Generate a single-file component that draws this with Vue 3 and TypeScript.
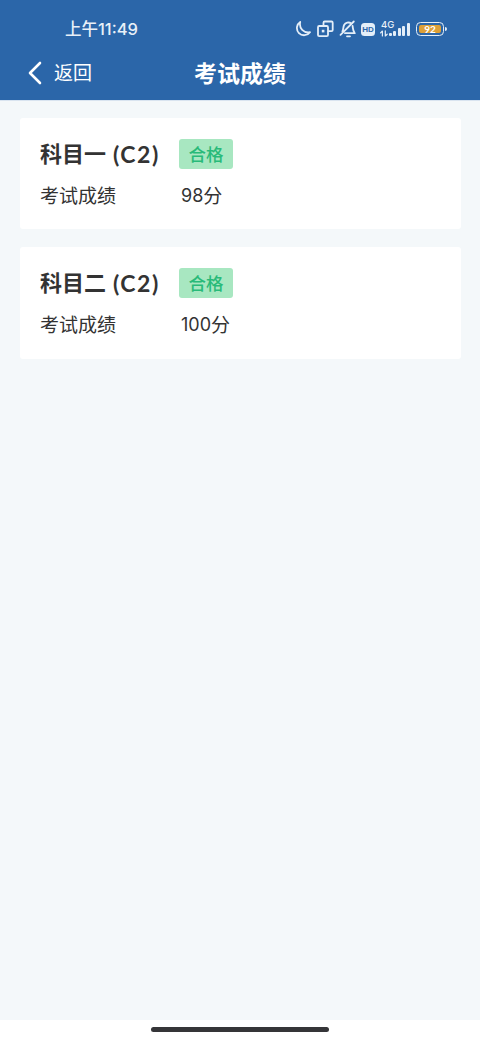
<script setup lang="ts">
interface Exam {
  subject: string
  vehicle: string
  result: string
  score: number
}

const exams: Exam[] = [
  { subject: '科目一', vehicle: '(C2)', result: '合格', score: 98 },
  { subject: '科目二', vehicle: '(C2)', result: '合格', score: 100 },
]
const signalBars: number[] = [3, 5, 8, 10, 13]
</script>

<template>
  <div class="screen">
    <header class="header">
      <div class="status">
        <div class="time"><span>上午</span><span class="clock">11:49</span></div>
        <div class="icons">
          <svg class="moon" width="16" height="18" viewBox="0 0 16 18">
            <path d="M5.2 2A7.2 7.2 0 1 0 15 12.2C8.6 13.2 3.8 8.4 5.2 2Z" />
          </svg>
          <svg class="windows" width="17" height="18" viewBox="0 0 17 18">
            <path d="M6.5 5V2.7Q6.5 1.5 7.7 1.5H14.5Q15.7 1.5 15.7 2.7V10Q15.7 11.2 14.5 11.2H11.5" />
            <rect x="1" y="6" width="10" height="10.2" rx="1.2" />
            <rect class="solid" x="4.8" y="9.8" width="2.6" height="2.6" />
          </svg>
          <svg class="bell" width="18" height="18" viewBox="0 0 18 18">
            <path d="M3.4 11.2C4.6 9.6 4 7.1 5.1 5C6.4 2.6 9.8 1.8 12 3.2M13.6 6C14 8.4 13.7 10.6 15.8 13.2H6M1.5 14.8L14.8 1.5M8 16.3H11" />
          </svg>
          <span class="hd">HD</span>
          <div class="signal">
            <span class="network">4G</span>
            <svg class="data" width="8" height="7" viewBox="0 0 8 7">
              <path d="M2.4 6V1L.6 2.8M5.3 .8V6L7.2 4.2" />
            </svg>
            <div class="bars">
              <i v-for="h in signalBars" :key="h" :style="{ height: h + 'px' }"></i>
            </div>
          </div>
          <div class="battery"><span>92</span></div>
        </div>
      </div>
      <nav class="nav">
        <div class="back">
          <svg width="14" height="24" viewBox="0 0 14 24"><path d="M12 2L2 12L12 22" /></svg>
          <span>返回</span>
        </div>
        <h1>考试成绩</h1>
      </nav>
    </header>
    <main class="content">
      <section v-for="exam in exams" :key="exam.subject" class="card">
        <div class="heading">
          <h2>{{ exam.subject }}</h2>
          <span class="vehicle">{{ exam.vehicle }}</span>
          <span class="badge">{{ exam.result }}</span>
        </div>
        <div class="row">
          <span class="label">考试成绩</span>
          <span class="score">{{ exam.score }}</span><span>分</span>
        </div>
      </section>
    </main>
    <footer class="footer"><div class="handle"></div></footer>
  </div>
</template>

<style>
body { margin: 0; }
</style>

<style scoped>
.screen {
  width: 480px;
  height: 1040px;
  display: flex;
  flex-direction: column;
  background: #f4f8fa;
  color: #333;
  font-family: Lato, "Noto Sans CJK SC", sans-serif;
}
.header {
  height: 100px;
  flex: none;
  background: #2b66a9;
  border-bottom: 1px solid #d9e4f0;
  box-sizing: content-box;
  color: #fff;
}
.status {
  height: 45px;
  padding: 12px 33px 0 65px;
  box-sizing: border-box;
  display: flex;
  justify-content: space-between;
  color: #e8f0f8;
}
.time {
  display: flex;
  align-items: center;
  height: 34px;
  font-size: 16.5px;
  font-weight: 500;
  line-height: 34px;
}
.clock {
  font-family: Inter, sans-serif;
  font-size: 16.5px;
  font-weight: 500;
}
.icons {
  display: flex;
  align-items: center;
  height: 34px;
}
.icons svg {
  flex: none;
  fill: none;
  stroke: #e4eef8;
  stroke-width: 1.8;
  stroke-linecap: round;
  stroke-linejoin: round;
}
.icons .solid { fill: #e4eef8; stroke: none; }
.windows { margin-left: 6px; }
.bell { margin-left: 5px; }
.hd {
  width: 14px;
  height: 13px;
  margin-left: 4px;
  border-radius: 3.5px;
  background: #e4eef8;
  color: #2b66a9;
  font: bold 8px/13px "Liberation Sans", sans-serif;
  text-align: center;
}
.signal {
  position: relative;
  width: 30px;
  height: 18px;
  margin-left: 5px;
}
.network {
  position: absolute;
  left: 1px;
  top: 0;
  font: 500 9.5px/9px Inter, sans-serif;
}
.icons .data {
  position: absolute;
  left: 0;
  bottom: 1px;
  stroke-width: 1.2;
}
.bars {
  position: absolute;
  right: 0.5px;
  bottom: 2px;
  display: flex;
  align-items: flex-end;
  gap: 1.8px;
}
.bars i {
  width: 2.7px;
  border-radius: 1px;
  background: #e4eef8;
}
.battery {
  position: relative;
  width: 28px;
  height: 14px;
  margin: 0 3px 0 6px;
  padding: 2px;
  box-sizing: border-box;
  border: 1px solid #e4eef8;
  border-radius: 4.5px;
}
.battery span {
  display: block;
  height: 8px;
  border-radius: 2px;
  background: #dda038;
  color: #fff;
  font: bold 10px/8px Lato, sans-serif;
  text-align: center;
}
.battery::after {
  content: "";
  position: absolute;
  right: -3.5px;
  top: 4px;
  width: 2px;
  height: 4px;
  border-radius: 0 2px 2px 0;
  background: #e4eef8;
}
.nav {
  display: grid;
  grid-template-columns: 1fr auto 1fr;
  align-items: start;
  height: 55px;
}
.back {
  display: flex;
  align-items: center;
  padding-left: 28px;
  font-size: 19px;
  line-height: 55px;
}
.back svg {
  margin-right: 12px;
  fill: none;
  stroke: #fff;
  stroke-width: 2.6;
  stroke-linecap: round;
  stroke-linejoin: round;
}
h1 {
  margin: 0;
  font-size: 23px;
  line-height: 57px;
  font-weight: 700;
}
.content {
  flex: 1;
  display: flex;
  flex-direction: column;
  gap: 18px;
  padding: 17px 19px 0 20px;
}
.card {
  height: 111.4px;
  padding: 21px 20px 0;
  box-sizing: border-box;
  border-radius: 3px;
  background: #fff;
}
.heading {
  display: flex;
  align-items: center;
  height: 30px;
}
h2 {
  margin: 0;
  font-size: 22px;
  line-height: 30px;
  font-weight: 700;
}
.vehicle {
  width: 66.5px;
  margin-left: 7px;
  font-size: 23px;
  font-weight: 700;
  line-height: 30px;
  letter-spacing: 1.5px;
}
.badge {
  width: 54px;
  height: 30px;
  margin-left: -0.5px;
  border-radius: 3px;
  background: #a8e7c1;
  color: #28ba79;
  font-size: 17.5px;
  font-weight: 500;
  line-height: 31px;
  text-align: center;
}
.row {
  display: flex;
  margin-top: 12px;
  font-size: 19px;
  line-height: 30px;
}
.label { width: 141px; }
.score {
  font-family: Inter, sans-serif;
  font-size: 18px;
}
.footer {
  height: 20px;
  flex: none;
  display: flex;
  justify-content: center;
  background: #fff;
}
.handle {
  width: 178px;
  height: 5px;
  margin-top: 7px;
  border-radius: 3px;
  background: #353538;
}
</style>
